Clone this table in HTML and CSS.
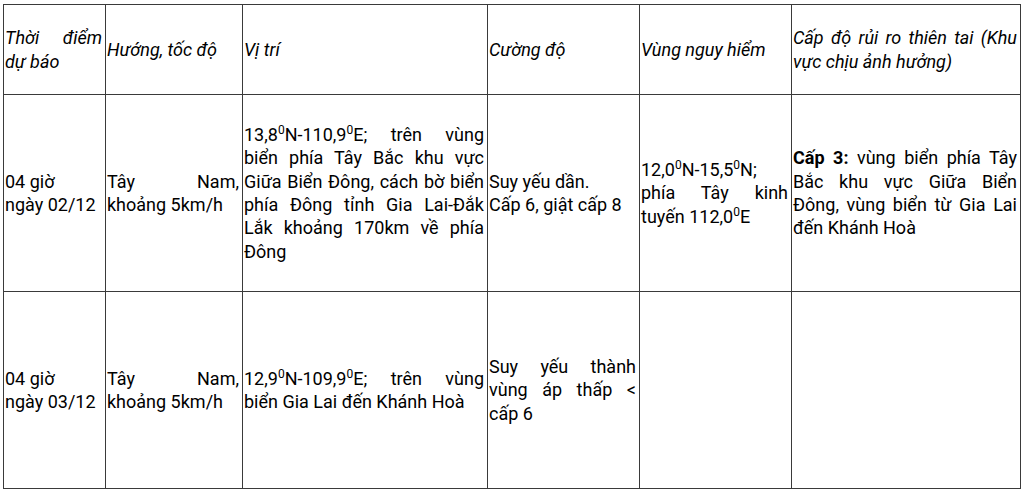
FILE: index.html
```html
<!DOCTYPE html>
<html lang="vi">
<head>
<meta charset="utf-8">
<link rel="stylesheet" href="styles.css">
</head>
<body>
<table class="forecast">
  <colgroup>
    <col class="c1"><col class="c2"><col class="c3"><col class="c4"><col class="c5"><col class="c6">
  </colgroup>
  <tr class="head">
    <td>Thời điểm dự báo</td>
    <td>Hướng, tốc độ</td>
    <td>Vị trí</td>
    <td>Cường độ</td>
    <td>Vùng nguy hiểm</td>
    <td>Cấp độ rủi ro thiên tai (Khu vực chịu ảnh hưởng)</td>
  </tr>
  <tr class="row">
    <td>04 giờ<br>ngày 02/12</td>
    <td>Tây Nam, khoảng 5km/h</td>
    <td>13,8<sup>0</sup>N-110,9<sup>0</sup>E; trên vùng biển phía Tây Bắc khu vực Giữa Biển Đông, cách bờ biển phía Đông tỉnh Gia Lai-Đắk Lắk khoảng 170km về phía Đông</td>
    <td>Suy yếu dần.<br>Cấp 6, giật cấp 8</td>
    <td>12,0<sup>0</sup>N-15,5<sup>0</sup>N; phía Tây kinh tuyến 112,0<sup>0</sup>E</td>
    <td><b>Cấp 3:</b> vùng biển phía Tây Bắc khu vực Giữa Biển Đông, vùng biển từ Gia Lai đến Khánh Hoà</td>
  </tr>
  <tr class="row">
    <td>04 giờ<br>ngày 03/12</td>
    <td>Tây Nam, khoảng 5km/h</td>
    <td>12,9<sup>0</sup>N-109,9<sup>0</sup>E; trên vùng biển Gia Lai đến Khánh Hoà</td>
    <td>Suy yếu thành vùng áp thấp &lt; cấp 6</td>
    <td></td>
    <td></td>
  </tr>
</table>
</body>
</html>
```
FILE: styles.css
```css
html, body {
  margin: 0;
  padding: 0;
  background: #fff;
}
body {
  font-family: Roboto, "Liberation Sans", sans-serif;
  font-size: 18px;
  line-height: 23.3px;
  color: #000;
}
.forecast {
  margin: 4px 0 0 3px;
  border-collapse: collapse;
  table-layout: fixed;
  width: 1018px;
}
.c1 { width: 102px; }
.c2 { width: 137px; }
.c3 { width: 245px; }
.c4 { width: 152px; }
.c5 { width: 152px; }
.c6 { width: 229px; }
.forecast td {
  border: 1px solid #3a3a3a;
  padding: 0 3px 0 1px;
  vertical-align: middle;
  text-align: justify;
}
.head { height: 90px; }
.head td { font-style: italic; }
.row { height: 197px; }
sup {
  font-size: 12px;
  line-height: 1;
  vertical-align: 7px;
}
b { font-weight: 700; }
```
